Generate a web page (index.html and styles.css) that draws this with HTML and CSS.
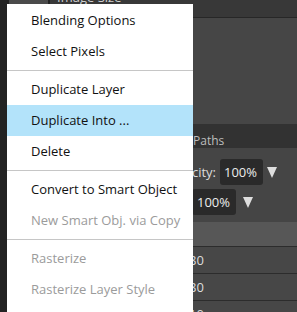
FILE: index.html
```html
<!DOCTYPE html>
<html>
<head>
    <meta charset="UTF-8">
    <title>Layer menu</title>
    <link rel="stylesheet" href="styles.css">
</head>
<body>
<div class="app">
    <div class="toolbar"></div>
    <div class="main">
        <div class="doc-bar">
            <div class="doc-thumb"></div>
            <div class="doc-tab"><span class="doc-title">Image Size</span></div>
        </div>
        <div class="canvas"></div>
        <div class="panel-tabs">
            <span class="tab tab-layers">Layers</span>
            <span class="tab tab-channels">Channels</span>
            <span class="tab">Paths</span>
        </div>
        <div class="layer-opts">
            <div class="opt-row opt-opacity">
                <span class="opt-label">Opacity:</span>
                <span class="opt-box">100%</span>
                <span class="opt-arrow"></span>
            </div>
            <div class="opt-row opt-fill">
                <span class="opt-label">Fill:</span>
                <span class="opt-box">100%</span>
                <span class="opt-arrow"></span>
            </div>
        </div>
        <div class="layer-head"></div>
        <div class="layer-row">80</div>
        <div class="layer-row">80</div>
        <div class="layer-row">10</div>
    </div>
</div>

<ul class="context-menu">
    <li>Blending Options</li>
    <li>Select Pixels</li>
    <li class="sep"></li>
    <li>Duplicate Layer</li>
    <li class="active">Duplicate Into ...</li>
    <li>Delete</li>
    <li class="sep"></li>
    <li>Convert to Smart Object</li>
    <li class="disabled">New Smart Obj. via Copy</li>
    <li class="sep"></li>
    <li class="disabled">Rasterize</li>
    <li class="disabled">Rasterize Layer Style</li>
</ul>
</body>
</html>
```

FILE: styles.css
```css
body {
    margin: 0;
    font-family: "Open Sans", sans-serif;
    background-color: #232323;
    height: 312px;
    overflow: hidden;
}
.app {
    display: flex;
    height: 312px;
    overflow: hidden;
}
.toolbar {
    width: 9px;
    background-color: #232323;
}
.main {
    flex: 1;
    display: flex;
    flex-direction: column;
    overflow: hidden;
}
.main > div {
    flex-shrink: 0;
}
.doc-bar {
    display: flex;
    height: 17px;
    border-bottom: 1px solid #272727;
    background-color: #383838;
    overflow: hidden;
}
.doc-thumb {
    width: 39px;
    background-color: #4a4a4a;
}
.doc-tab {
    flex: 1;
    border-left: 2px solid #222;
    padding-left: 7px;
}
.doc-title {
    display: block;
    margin-top: -9px;
    font-size: 13px;
    line-height: 13px;
    color: #cfcfcf;
}
.canvas {
    height: 106px;
    background-color: #464646;
}
.panel-tabs {
    display: flex;
    height: 24px;
    box-sizing: border-box;
    padding-top: 9px;
    background-color: #323232;
    font-size: 12px;
    line-height: 15px;
    color: #bdbdbd;
}
.tab-layers {
    width: 80px;
}
.tab-channels {
    width: 104px;
}
.layer-opts {
    height: 74px;
    box-sizing: border-box;
    padding-top: 11px;
    display: flex;
    flex-direction: column;
    gap: 4px;
    background-color: #454545;
    font-size: 13px;
    color: #dcdcdc;
}
.opt-row {
    display: flex;
    align-items: center;
    height: 26px;
}
.opt-label {
    width: 80px;
    text-align: right;
    margin-right: 4px;
}
.opt-opacity {
    padding-left: 127px;
}
.opt-fill {
    padding-left: 99px;
}
.opt-box {
    width: 43px;
    height: 26px;
    line-height: 26px;
    box-sizing: border-box;
    padding-left: 4px;
    border-radius: 3px;
    background-color: #2a2a2a;
    color: #ececec;
}
.opt-fill .opt-box {
    width: 44px;
    padding-left: 5px;
}
.opt-arrow {
    width: 0;
    height: 0;
    margin-left: 4px;
    border-left: 5px solid transparent;
    border-right: 5px solid transparent;
    border-top: 11px solid #dedede;
}
.opt-fill .opt-arrow {
    margin-left: 7px;
}
.layer-head {
    height: 24px;
    background-color: #575757;
}
.layer-row {
    height: 26px;
    border-top: 1px solid #2c2c2c;
    background-color: #474747;
    padding-left: 180px;
    font-size: 13px;
    line-height: 26px;
    color: #dcdcdc;
}

.context-menu {
    position: absolute;
    left: 7px;
    top: 4px;
    width: 186px;
    margin: 0;
    padding: 1px 0 10px;
    list-style: none;
    background-color: #fff;
    font-size: 13px;
    color: #111;
}
.context-menu li {
    height: 31px;
    line-height: 31px;
    padding-left: 24px;
    white-space: nowrap;
}
.context-menu li.sep {
    height: 1px;
    padding: 0;
    margin: 3px 0;
    background-color: #c6c6c6;
}
.context-menu li.active {
    background-color: #b3e3fa;
}
.context-menu li.disabled {
    color: #9b9b9b;
}
```
